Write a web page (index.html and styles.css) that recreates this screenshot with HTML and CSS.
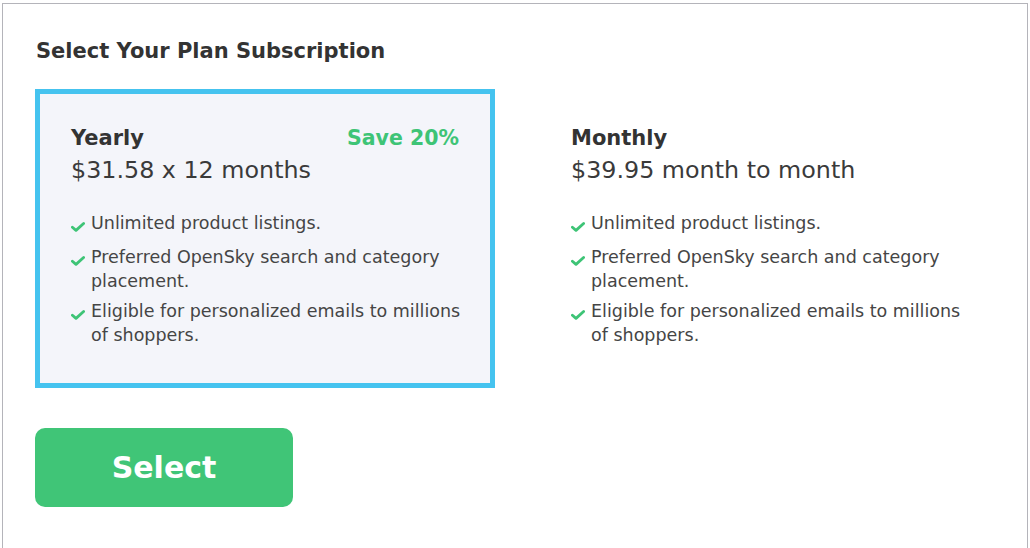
FILE: index.html
```html
<!DOCTYPE html>
<html lang="en">
<head>
<meta charset="utf-8">
<title>Select Your Plan Subscription</title>
<link rel="stylesheet" href="styles.css">
</head>
<body>
<div class="frame">
  <h1 class="title">Select Your Plan Subscription</h1>
  <div class="plans">
    <div class="plan plan-selected">
      <div class="plan-head">
        <span class="plan-name">Yearly</span>
        <span class="plan-save">Save 20%</span>
      </div>
      <div class="plan-price">$31.58 x 12 months</div>
      <ul class="features">
        <li class="feature"><svg class="check" viewBox="0 0 14 10"><path d="M1.4 5.2 L5 8.4 L12.6 1.5" fill="none" stroke="#3ec476" stroke-width="2.8" stroke-linecap="round" stroke-linejoin="round"/></svg><span>Unlimited product listings.</span></li>
        <li class="feature"><svg class="check" viewBox="0 0 14 10"><path d="M1.4 5.2 L5 8.4 L12.6 1.5" fill="none" stroke="#3ec476" stroke-width="2.8" stroke-linecap="round" stroke-linejoin="round"/></svg><span>Preferred OpenSky search and category placement.</span></li>
        <li class="feature"><svg class="check" viewBox="0 0 14 10"><path d="M1.4 5.2 L5 8.4 L12.6 1.5" fill="none" stroke="#3ec476" stroke-width="2.8" stroke-linecap="round" stroke-linejoin="round"/></svg><span>Eligible for personalized emails to millions of shoppers.</span></li>
      </ul>
    </div>
    <div class="plan">
      <div class="plan-head">
        <span class="plan-name">Monthly</span>
      </div>
      <div class="plan-price">$39.95 month to month</div>
      <ul class="features">
        <li class="feature"><svg class="check" viewBox="0 0 14 10"><path d="M1.4 5.2 L5 8.4 L12.6 1.5" fill="none" stroke="#3ec476" stroke-width="2.8" stroke-linecap="round" stroke-linejoin="round"/></svg><span>Unlimited product listings.</span></li>
        <li class="feature"><svg class="check" viewBox="0 0 14 10"><path d="M1.4 5.2 L5 8.4 L12.6 1.5" fill="none" stroke="#3ec476" stroke-width="2.8" stroke-linecap="round" stroke-linejoin="round"/></svg><span>Preferred OpenSky search and category placement.</span></li>
        <li class="feature"><svg class="check" viewBox="0 0 14 10"><path d="M1.4 5.2 L5 8.4 L12.6 1.5" fill="none" stroke="#3ec476" stroke-width="2.8" stroke-linecap="round" stroke-linejoin="round"/></svg><span>Eligible for personalized emails to millions of shoppers.</span></li>
      </ul>
    </div>
  </div>
  <button class="select-btn" type="button">Select</button>
</div>
</body>
</html>
```
FILE: styles.css
```css
html, body {
  margin: 0;
  padding: 0;
  background: #ffffff;
  height: 100%;
  overflow: hidden;
}
body {
  font-family: "DejaVu Sans", Inter, sans-serif;
  color: #333333;
}
.frame {
  margin: 3px 2px 0 2px;
  border: 1px solid #b4b4ba;
  border-bottom: none;
  height: 545px;
  padding: 0 32px;
  box-sizing: border-box;
}
.title {
  margin: 33px 0 0 1px;
  font-size: 21px;
  line-height: 28px;
  font-weight: 700;
  color: #333333;
}
.plans {
  display: flex;
  gap: 40px;
  margin-top: 24px;
}
.plan {
  width: 460px;
  height: 299px;
  box-sizing: border-box;
  border: 5px solid transparent;
  padding: 31px 22px 0 31px;
}
.plan-selected {
  border-color: #45c3ef;
  background: #f4f5fa;
}
.plan-head {
  display: flex;
  justify-content: space-between;
  align-items: baseline;
  height: 26px;
  line-height: 26px;
  padding-right: 9px;
}
.plan-name {
  font-size: 21px;
  font-weight: 700;
  color: #333333;
}
.plan-save {
  font-size: 20.5px;
  font-weight: 700;
  color: #3ec476;
}
.plan-price {
  font-size: 23.8px;
  line-height: 30px;
  margin-top: 4px;
  color: #3a3a3a;
}
.features {
  list-style: none;
  margin: 26px 0 0 0;
  padding: 0;
}
.feature {
  display: flex;
  align-items: flex-start;
  font-size: 17.5px;
  line-height: 24px;
  color: #454545;
  margin-bottom: 6px;
}
.feature:first-child {
  margin-bottom: 10px;
}
.check {
  flex: none;
  width: 14px;
  height: 10px;
  margin: 11px 6px 0 0;
}
.select-btn {
  display: flex;
  align-items: center;
  justify-content: center;
  margin-top: 40px;
  width: 258px;
  height: 79px;
  border: none;
  border-radius: 10px;
  background: #40c577;
  color: #ffffff;
  font-family: "DejaVu Sans", Inter, sans-serif;
  font-size: 30px;
  font-weight: 700;
  padding: 0;
}
```
